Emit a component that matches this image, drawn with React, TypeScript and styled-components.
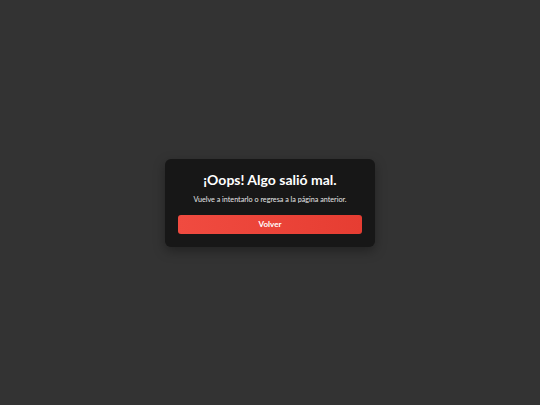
import React from 'react';
import styled, { createGlobalStyle } from 'styled-components';

const GlobalStyle = createGlobalStyle`
  html, body {
    margin: 0;
    padding: 0;
    height: 100%;
    background-color: #333333;
  }
  #root {
    height: 100%;
  }
  * {
    box-sizing: border-box;
  }
`;

const Page = styled.div`
  display: flex;
  justify-content: center;
  align-items: center;
  width: 100vw;
  height: 100vh;
  font-family: 'Lato', 'Noto Sans', sans-serif;
`;

const Card = styled.div`
  display: flex;
  flex-direction: column;
  align-items: center;
  width: 210px;
  padding: 12px 13px 13px;
  background-color: #171717;
  border-radius: 6px;
  box-shadow: rgba(0, 0, 0, 0.35) 0px 4px 12px;
`;

const Title = styled.h1`
  margin: 0;
  font-size: 14px;
  line-height: 18px;
  font-weight: 700;
  color: #ffffff;
`;

const Message = styled.p`
  margin: 6px 0 0;
  font-size: 7.2px;
  line-height: 10px;
  color: #e6e6e6;
`;

const Button = styled.button`
  margin-top: 10px;
  width: 100%;
  height: 19px;
  border: none;
  border-radius: 3px;
  background: linear-gradient(90deg, #f04b40, #e63d32);
  color: #ffffff;
  font-family: inherit;
  font-size: 8px;
  font-weight: 700;
  cursor: pointer;
`;

function App() {
  return (
    <Page>
      <GlobalStyle />
      <Card>
        <Title>¡Oops! Algo salió mal.</Title>
        <Message>Vuelve a intentarlo o regresa a la página anterior.</Message>
        <Button>Volver</Button>
      </Card>
    </Page>
  );
}

export default App;
